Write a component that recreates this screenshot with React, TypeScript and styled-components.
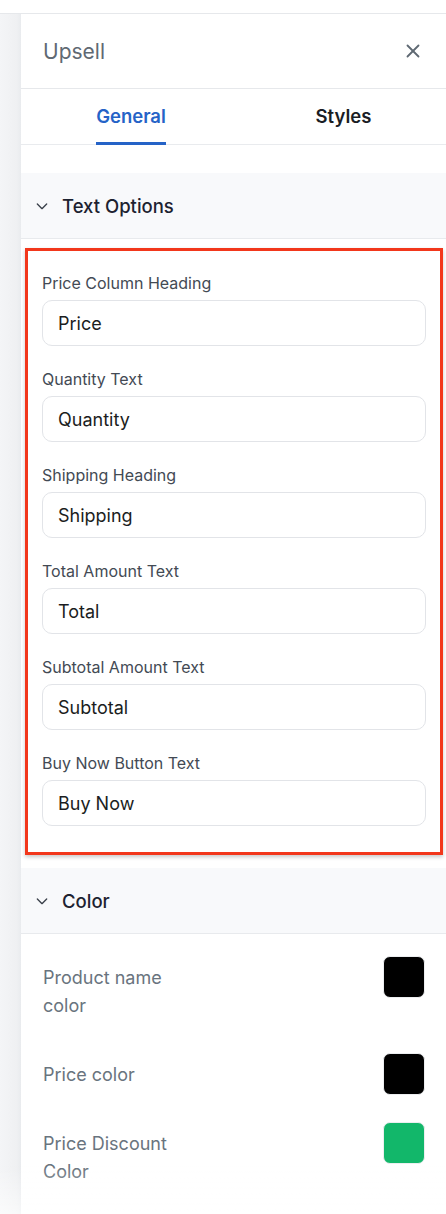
import * as React from "react";
import styled, { createGlobalStyle } from "styled-components";

const GlobalStyle = createGlobalStyle`
  html, body {
    margin: 0;
    padding: 0;
    background: #ffffff;
    font-family: Inter, "Noto Sans", "Liberation Sans", sans-serif;
    -webkit-font-smoothing: antialiased;
  }
  * {
    box-sizing: border-box;
  }
`;

const Page = styled.div`
  width: 446px;
  min-height: 1214px;
  display: flex;
  flex-direction: column;
  overflow: hidden;
`;

const TopStrip = styled.div`
  height: 14px;
  border-bottom: 1px solid #e6e8eb;
  background: #ffffff;
`;

const Body = styled.div`
  display: flex;
  flex: 1;
`;

const Gutter = styled.div`
  width: 21px;
  flex-shrink: 0;
  background: linear-gradient(to right, #f4f5f7 0%, #eff0f2 80%, #e9ebee 100%);
`;

const Panel = styled.div`
  flex: 1;
  background: #ffffff;
  display: flex;
  flex-direction: column;
`;

const Header = styled.div`
  height: 74px;
  padding: 0 22px;
  display: flex;
  align-items: center;
  justify-content: space-between;
`;

const Title = styled.h2`
  margin: 0;
  font-size: 21px;
  font-weight: 400;
  color: #5f6973;
`;

const CloseButton = styled.button`
  border: 0;
  background: none;
  padding: 0;
  display: flex;
  color: #5f6973;
  cursor: pointer;
`;

const Tabs = styled.div`
  height: 57px;
  border-top: 1px solid #e6e8eb;
  border-bottom: 1px solid #e9ebee;
  display: grid;
  grid-template-columns: 220px 1fr;
`;

const TabCell = styled.div`
  display: flex;
  justify-content: center;
`;

const Tab = styled.div<{ $active?: boolean }>`
  display: flex;
  align-items: center;
  height: 56px;
  margin-bottom: -1px;
  font-size: 18.5px;
  font-weight: 600;
  color: ${(p) => (p.$active ? "#2563c7" : "#1a1d24")};
  border-bottom: 3px solid ${(p) => (p.$active ? "#2563c7" : "transparent")};
`;

const ScrollGap = styled.div`
  height: 28px;
`;

const SectionHeader = styled.div<{ $top?: number }>`
  height: 66px;
  margin-top: ${(p) => p.$top ?? 0}px;
  background: #f8f9fb;
  border-bottom: 1px solid #e8eaed;
  display: flex;
  align-items: center;
  gap: 12px;
  padding-left: 13px;
  font-size: 18.5px;
  font-weight: 500;
  color: #1d2230;
`;

const Highlight = styled.div`
  margin: 9px 3px 0 4px;
  border: 3.5px solid #f2371b;
  box-shadow: 0 2px 4px rgba(0, 0, 0, 0.22);
  padding: 22px 14px 26px;
  display: flex;
  flex-direction: column;
  gap: 23px;
`;

const Field = styled.label`
  display: flex;
  flex-direction: column;
  gap: 7px;
`;

const FieldLabel = styled.span`
  font-size: 16px;
  line-height: 20px;
  color: #434a54;
`;

const TextInput = styled.input`
  height: 46px;
  width: 100%;
  border: 1px solid #e2e4e8;
  border-radius: 10px;
  padding: 0 15px;
  font-family: inherit;
  font-size: 18px;
  color: #1b1d21;
  background: #ffffff;
  outline: none;
`;

const ColorList = styled.div`
  padding: 22px 21px 40px 22px;
  display: flex;
  flex-direction: column;
  gap: 25px;
`;

const ColorRow = styled.div`
  display: flex;
  justify-content: space-between;
  align-items: flex-start;
`;

const ColorLabel = styled.div`
  padding: 8px 0;
  width: 150px;
  font-size: 18px;
  line-height: 28px;
  color: #69747e;
`;

const Swatch = styled.div<{ $color: string }>`
  width: 42px;
  height: 42px;
  border-radius: 7px;
  background: ${(p) => p.$color};
  border: 1px solid #eceef0;
`;

const BottomFade = styled.div`
  position: fixed;
  left: 0;
  right: 0;
  bottom: 0;
  height: 48px;
  pointer-events: none;
  background: linear-gradient(to bottom, rgba(255, 255, 255, 0), rgba(255, 255, 255, 0.6));
`;

const Chevron = () => (
  <svg width="16" height="16" viewBox="0 0 24 24" fill="none" stroke="#3a404a" strokeWidth="2" strokeLinecap="round" strokeLinejoin="round">
    <path d="m5 9 7 7 7-7" />
  </svg>
);

const CloseIcon = () => (
  <svg width="22" height="22" viewBox="0 0 24 24" fill="none" stroke="currentColor" strokeWidth="2" strokeLinecap="round">
    <path d="M18 6 6 18" />
    <path d="m6 6 12 12" />
  </svg>
);

const textFields = [
  { label: "Price Column Heading", value: "Price" },
  { label: "Quantity Text", value: "Quantity" },
  { label: "Shipping Heading", value: "Shipping" },
  { label: "Total Amount Text", value: "Total" },
  { label: "Subtotal Amount Text", value: "Subtotal" },
  { label: "Buy Now Button Text", value: "Buy Now" },
];

const colorFields = [
  { label: "Product name color", color: "#000000" },
  { label: "Price color", color: "#000000" },
  { label: "Price Discount Color", color: "#12b76a" },
];

export default function App() {
  return (
    <Page>
      <GlobalStyle />
      <TopStrip />
      <Body>
        <Gutter />
        <Panel>
          <Header>
            <Title>Upsell</Title>
            <CloseButton aria-label="Close">
              <CloseIcon />
            </CloseButton>
          </Header>
          <Tabs>
            <TabCell>
              <Tab $active>General</Tab>
            </TabCell>
            <TabCell>
              <Tab>Styles</Tab>
            </TabCell>
          </Tabs>
          <ScrollGap />
          <SectionHeader>
            <Chevron />
            Text Options
          </SectionHeader>
          <Highlight>
            {textFields.map((f) => (
              <Field key={f.label}>
                <FieldLabel>{f.label}</FieldLabel>
                <TextInput defaultValue={f.value} />
              </Field>
            ))}
          </Highlight>
          <SectionHeader $top={13}>
            <Chevron />
            Color
          </SectionHeader>
          <ColorList>
            {colorFields.map((c) => (
              <ColorRow key={c.label}>
                <ColorLabel>{c.label}</ColorLabel>
                <Swatch $color={c.color} />
              </ColorRow>
            ))}
          </ColorList>
        </Panel>
      </Body>
      <BottomFade />
    </Page>
  );
}
